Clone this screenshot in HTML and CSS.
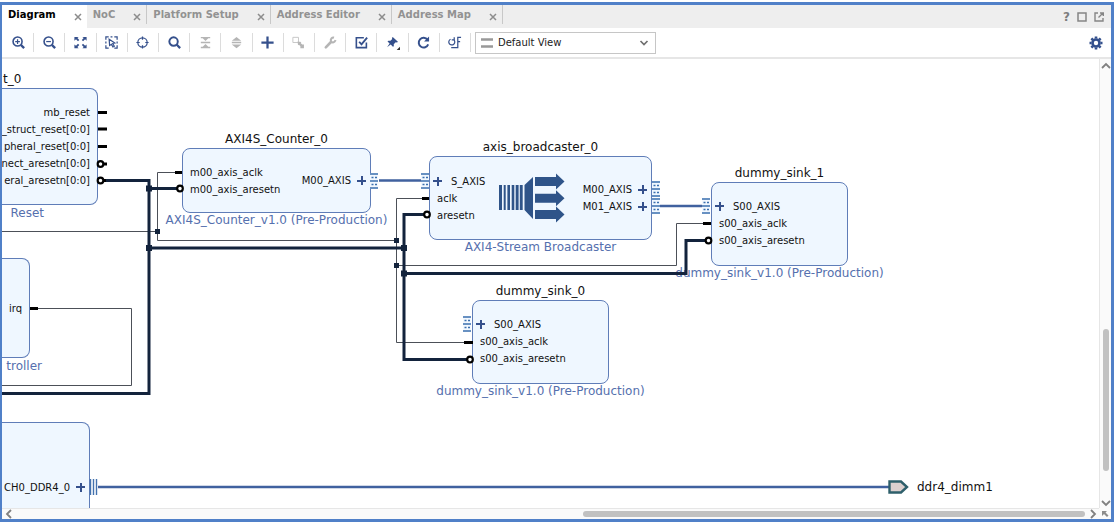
FILE: index.html
```html
<!DOCTYPE html>
<html lang="en">
<head>
<meta charset="utf-8">
<title>Diagram</title>
<link rel="stylesheet" href="styles.css">
</head>
<body>
<svg class="defs" aria-hidden="true">
  <defs>
    <symbol id="x" viewBox="0 0 8 8"><path d="M1 1L7 7M7 1L1 7" stroke="#8c8c8c" stroke-width="1.5" fill="none"/></symbol>
    <g id="bus" stroke="#3b6fae" stroke-width="1.3">
      <rect width="8" height="16" fill="#f2f8ff" stroke="none"/>
      <path d="M0 1H8M0 8H8M0 15H8"/>
      <path d="M1.5 4.5H3.5M5 4.5H7M1.5 11.5H3.5M5 11.5H7"/>
    </g>
    <circle id="ring" r="2.8" fill="#fff" stroke="#000" stroke-width="2.2"/>
    <rect id="dot" x="-3" y="-3" width="6" height="6"/>
    <path id="arrow" d="M0 -4.5H21V-8L29.500 0L21 8V4.500H0Z"/>
  </defs>
</svg>
<main class="frame">
  <header class="tabs">
    <nav class="tablist">
      <div class="tab active"><button class="name">Diagram</button><button class="close" aria-label="Close"><svg><use href="#x"/></svg></button></div>
      <div class="tab"><button class="name">NoC</button><button class="close" aria-label="Close"><svg><use href="#x"/></svg></button></div>
      <div class="tab"><button class="name">Platform Setup</button><button class="close" aria-label="Close"><svg><use href="#x"/></svg></button></div>
      <div class="tab"><button class="name">Address Editor</button><button class="close" aria-label="Close"><svg><use href="#x"/></svg></button></div>
      <div class="tab"><button class="name">Address Map</button><button class="close" aria-label="Close"><svg><use href="#x"/></svg></button></div>
    </nav>
    <div class="window-actions">
      <button class="help">?</button>
      <button aria-label="Maximize"><svg width="10" height="10" viewBox="0 0 10 10"><rect x="1" y="1" width="8" height="8" fill="none" stroke="#858585" stroke-width="1.5"/></svg></button>
      <button aria-label="Float"><svg width="10" height="10" viewBox="0 0 10 10" fill="none" stroke="#858585" stroke-width="1.4"><path d="M4 1H1V9H9V6M4.500 5.500L9 1M6 1H9.300V4"/></svg></button>
    </div>
  </header>

  <div class="toolbar">
    <div class="tools">
      <button aria-label="Zoom in"><svg viewBox="0 0 16 16"><g class="ln"><circle cx="7" cy="7" r="4.8"/><path d="M10.500 10.500L14 14" stroke-width="2.4"/><path d="M4.500 7H9.500M7 4.500V9.500" stroke-width="1.300"/></g></svg></button>
      <button aria-label="Zoom out"><svg viewBox="0 0 16 16"><g class="ln"><circle cx="7" cy="7" r="4.8"/><path d="M10.500 10.500L14 14" stroke-width="2.4"/><path d="M4.500 7H9.500" stroke-width="1.300"/></g></svg></button>
      <button aria-label="Zoom fit"><svg viewBox="0 0 16 16"><path class="fl" d="M1.500 2H6L4.700 3.300L6.700 5.300L5.300 6.600L3.200 4.600L1.500 6ZM14.500 2V6L12.900 4.600L10.700 6.600L9.400 5.300L11.400 3.300L10 2ZM1.500 14V10L3.200 11.500L5.300 9.400L6.700 10.700L4.700 12.700L6 14ZM14.500 14H10L11.400 12.700L9.400 10.700L10.700 9.400L12.900 11.500L14.500 10Z"/></svg></button>
      <button aria-label="Zoom to selection"><svg viewBox="0 0 16 16"><g class="ln thin"><path d="M2 5V2H5M7 2H9M11 2H14V5M14 7V9M14 11V14H11M5 14H2V11M2 9V7"/><path d="M5.500 4.500L11.500 8.500L9.300 9L11 12L9.500 12.800L8 9.900L6 11.200Z"/></g></svg></button>
      <button aria-label="Center"><svg viewBox="0 0 16 16"><g class="ln thin"><circle cx="8" cy="8" r="5"/><path d="M8 1.500V5M8 11V14.500M1.500 8H5M11 8H14.500"/></g></svg></button>
      <button aria-label="Search"><svg viewBox="0 0 16 16"><g class="ln wide"><circle cx="7" cy="7" r="4.500"/><path d="M10.200 10.200L14 14" stroke-width="2.400"/></g></svg></button>
      <button aria-label="Collapse"><svg viewBox="0 0 16 16"><path class="off" d="M3 2H13V3.500H3ZM3 7.300H13V8.700H3ZM3 12.500H13V14H3ZM5 3.500H11L8 6.500ZM5 12.500H11L8 9.500Z"/></svg></button>
      <button aria-label="Expand"><svg viewBox="0 0 16 16"><path class="off" d="M3 6L8 2L13 6ZM3 10L8 14L13 10ZM3 7.300H13V8.700H3Z"/></svg></button>
      <button aria-label="Add IP"><svg viewBox="0 0 16 16"><path class="fl" d="M6.800 1.500H9.200V6.800H14.500V9.200H9.200V14.500H6.800V9.200H1.500V6.800H6.800Z"/></svg></button>
      <button aria-label="Make external"><svg viewBox="0 0 16 16"><path d="M2 2.500H8V8H2Z" fill="none" stroke="#c5c5c5"/><path class="off" d="M7 7L11 7.500L10.300 8.500L12 10L13.800 10V14H10V12L8.500 10.300L7.500 11Z"/></svg></button>
      <button aria-label="Customize"><svg viewBox="0 0 16 16"><path d="M3 13.200L8.500 7.500" stroke="#b5b5b5" stroke-width="2.800" stroke-linecap="round"/><path d="M11.800 2.800C9.500 2.400 7.700 4.300 8.500 6.500S12 8.500 13.500 5.500" stroke="#b5b5b5" stroke-width="2.200" fill="none"/></svg></button>
      <button aria-label="Validate"><svg viewBox="0 0 16 16"><g class="ln"><path d="M10.500 3H2.500V13.500H13.200V8"/><path d="M5.500 7.200L8 10L14 2.800" stroke-width="2"/></g></svg></button>
      <button aria-label="Pin"><svg viewBox="0 0 18 16"><path class="fl" d="M9.300 1.500L15.500 7L14.500 8L12.800 7.600L10.500 10L10.600 12.500L9.500 13.200L6.800 10.500L2.500 13.800L5.500 9.300L3 6.800L4 5.800L6.500 6L8.700 3.700L8.300 2.500Z"/><path d="M18 13V17H14Z" fill="#333"/></svg></button>
      <button aria-label="Refresh"><svg viewBox="0 0 16 16"><path d="M12.300 5A5.200 5.200 0 1 0 13 10" class="ln wide"/><path class="fl" d="M13.900 1.500V7H8.600Z"/></svg></button>
      <button aria-label="Regenerate layout"><svg viewBox="0 0 16 16"><g class="ln thin"><path d="M3.800 4.500A3.200 3.200 0 1 0 7.200 5M7.700 2.500V5.300H5"/><path d="M15 2.500H11.500V13.500H4.500M11.500 7H14"/></g></svg></button>
    </div>
    <label class="view">
      <svg class="lines" width="12" height="10" viewBox="0 0 12 10"><path d="M0 1.500H12M0 8.500H12" stroke="#999" stroke-width="2.600"/></svg>
      <select aria-label="View"><option>Default View</option></select>
      <svg class="chev" width="10" height="8" viewBox="0 0 10 8"><path d="M1.500 2L5 5.500L8.500 2" fill="none" stroke="#707070" stroke-width="1.700"/></svg>
    </label>
    <button class="gear" aria-label="Settings"><svg width="14" height="14" viewBox="0 0 14 14"><g stroke="#324f8c" fill="none"><circle cx="7" cy="7" r="3.500" stroke-width="2.600"/><path d="M7 .5V2.500M7 11.500V13.500M.5 7H2.500M11.500 7H13.500M2.400 2.400L3.800 3.800M10.200 10.200L11.600 11.600M2.400 11.600L3.800 10.200M10.200 3.800L11.600 2.400" stroke-width="2.600"/></g></svg></button>
  </div>

  <div class="workspace">
    <section class="canvas">
      <article class="node cut reset">
        <h2>t_0</h2>
        <div class="box"><ul class="out"><li>mb_reset</li><li>_struct_reset[0:0]</li><li>pheral_reset[0:0]</li><li>nect_aresetn[0:0]</li><li>eral_aresetn[0:0]</li></ul></div>
        <p>Reset</p>
      </article>
      <article class="node cut irq">
        <div class="box"><ul class="out"><li>irq</li></ul></div>
        <p>troller</p>
      </article>
      <article class="node cut ddr">
        <div class="box"><ul class="out"><li>CH0_DDR4_0 <i class="plus"></i></li></ul></div>
      </article>
      <article class="node counter">
        <h2>AXI4S_Counter_0</h2>
        <div class="box"><ul><li>m00_axis_aclk</li><li>m00_axis_aresetn</li></ul><ul class="out"><li>M00_AXIS <i class="plus"></i></li></ul></div>
        <p>AXI4S_Counter_v1.0 (Pre-Production)</p>
      </article>
      <article class="node broadcaster">
        <h2>axis_broadcaster_0</h2>
        <div class="box"><ul><li class="bus"><i class="plus"></i> S_AXIS</li><li>aclk</li><li>aresetn</li></ul><ul class="out"><li>M00_AXIS <i class="plus"></i></li><li>M01_AXIS <i class="plus"></i></li></ul></div>
        <p>AXI4-Stream Broadcaster</p>
      </article>
      <article class="node sink sink1">
        <h2>dummy_sink_1</h2>
        <div class="box"><ul><li class="bus"><i class="plus"></i> S00_AXIS</li><li>s00_axis_aclk</li><li>s00_axis_aresetn</li></ul></div>
        <p>dummy_sink_v1.0 (Pre-Production)</p>
      </article>
      <article class="node sink sink0">
        <h2>dummy_sink_0</h2>
        <div class="box"><ul><li class="bus"><i class="plus"></i> S00_AXIS</li><li>s00_axis_aclk</li><li>s00_axis_aresetn</li></ul></div>
        <p>dummy_sink_v1.0 (Pre-Production)</p>
      </article>
      <span class="port">ddr4_dimm1</span>

      <svg class="wires" width="1098" height="449" viewBox="2 59 1098 449" aria-hidden="true">
        <g fill="none" stroke="#4c5058">
          <path d="M2 231.500H157.500M182 172.500H157.500V240.500H396.500M429 198.500H396.500V342.500H473M396.500 265.500H676.500V223.500H711M38 308.500H131.500V385.500H2"/>
        </g>
        <g fill="none" stroke="#13233c" stroke-width="3">
          <path d="M103 180.500H149V393.500H2M149 188.500H178M149 248H404V273.500M425 214.500H404V359.500H468M404 273.500H686V240.500H706"/>
        </g>
        <g fill="#13233c"><use href="#dot" x="149" y="188.500"/><use href="#dot" x="149" y="248"/><use href="#dot" x="404" y="248"/><use href="#dot" x="404" y="273.500"/></g>
        <path d="M155 229H160V234H155ZM394 238H399V243H394ZM394 263H399V268H394Z" fill="#13233c"/>
        <path d="M98 112.500H107M98 129H107M98 146.500H107M101 164H107M98 180.500H106M175 172.500H182M422 198.500H429M703 223.500H711M464 342.500H473M30 308.500H38" stroke="#000" stroke-width="3"/>
        <use href="#ring" x="100.500" y="164"/><use href="#ring" x="100.500" y="180.500"/><use href="#ring" x="180" y="188.500"/><use href="#ring" x="427" y="214.500"/><use href="#ring" x="708.500" y="240.500"/><use href="#ring" x="470" y="359.500"/>
        <path d="M379 180.500H422M660 206H703M98 487H889" stroke="#40619f" stroke-width="2.600"/>
        <use href="#bus" x="370" y="173"/><use href="#bus" x="421" y="173"/><use href="#bus" x="652" y="181"/><use href="#bus" x="652" y="198"/><use href="#bus" x="702" y="198"/><use href="#bus" x="463" y="316"/>
        <path d="M90.500 479V495M93.500 479V495M96.500 479V495" stroke="#4472ae" stroke-width="1.400"/>
        <path d="M889.500 481.500H901L907 487L901 492.500H889.500Z" fill="#dcd0cf" stroke="#2e5f6b" stroke-width="2.400"/>
        <g fill="#2f5489">
          <path d="M499 185H502V210H499ZM503.700 185H505.700V210H503.700ZM507.400 185H510V210H507.400ZM511.700 185H514.300V210H511.700ZM515.700 185H518.600V210H515.700ZM519.800 185H522.700V210H519.800ZM524.500 185L533 177V219L524.500 210Z"/>
          <use href="#arrow" x="535" y="181.500"/><use href="#arrow" x="535" y="198.300"/><use href="#arrow" x="535" y="214.500"/>
        </g>
      </svg>
    </section>
    <div class="vbar"><svg width="10" height="8" viewBox="0 0 10 8"><path d="M1 6L5 2L9 6"/></svg><div class="track"><i></i></div><svg width="10" height="8" viewBox="0 0 10 8"><path d="M1 2L5 6L9 2"/></svg></div>
    <div class="hbar"><svg width="8" height="10" viewBox="0 0 8 10"><path d="M6 1L2 5L6 9"/></svg><div class="track"><i></i></div><svg width="8" height="10" viewBox="0 0 8 10"><path d="M2 1L6 5L2 9"/></svg></div>
    <div class="corner"><svg width="8" height="8" viewBox="0 0 8 8"><path d="M1 1H6L4.500 2.500L7.500 5.500L6 7L3 4L1 6Z" fill="#8c8c8c"/></svg></div>
  </div>
</main>
</body>
</html>
```
FILE: styles.css
```css
* { box-sizing: border-box; }
body { margin: 0; background: #fff; font-family: "DejaVu Sans", sans-serif; font-size: 10px; color: #111; }
button { border: 0; padding: 0; background: none; font: inherit; color: inherit; display: flex; align-items: center; justify-content: center; }
ul, h2, p { margin: 0; padding: 0; list-style: none; font-weight: 400; }
.defs { position: absolute; width: 0; height: 0; }

.frame { display: flex; flex-direction: column; height: calc(100vh - 7px); margin: 2px 3px 5px 0; border: 3px solid #5080c8; border-left-width: 2px; }
.tabs { display: flex; justify-content: space-between; height: 23px; background: #eee; flex: none; }
.tablist { display: flex; }
.tab { display: flex; align-items: center; gap: 18px; padding: 0 5px 0 6px; color: #929292; font-weight: 700; border-right: 1px solid transparent; }
.tab:not(.active) { background: linear-gradient(#c8c8c8, #c8c8c8) right top / 1px 19px no-repeat border-box; }
.tab.active { background: #fff; color: #000; border-right: 0; }
.tab .name { height: 20px; line-height: 20px; align-self: flex-start; }
.close svg { display: block; width: 8px; height: 8px; }
.window-actions { display: flex; align-items: center; gap: 7px; padding-right: 7px; }
.help { color: #7d7d7d; font-size: 12px; font-weight: 700; }

.toolbar { display: flex; align-items: center; height: 31px; padding: 0 8px 0 1px; border-bottom: 2px solid #e6e6e6; flex: none; }
.tools { display: grid; grid-template-columns: repeat(15, 1fr); width: 468px; }
.tools button { height: 19px; border-right: 1px solid #dcdcdc; }
.tools svg { width: 15px; height: 15px; overflow: visible; }
.ln { fill: none; stroke: #35508c; stroke-width: 1.7; }
.ln.thin { stroke-width: 1.3; }
.ln.wide { stroke-width: 2.1; }
.fl { fill: #35508c; }
.off { fill: #b5b5b5; }
.view { position: relative; margin-left: 4px; }
.view select { display: block; width: 181px; height: 22px; padding: 0 20px 0 22px; border: 1px solid #c6c6c6; border-radius: 0; background: #fff; appearance: none; font: inherit; color: #222; }
.lines { position: absolute; left: 6px; top: 6px; }
.chev { position: absolute; right: 7px; top: 7px; }
.gear { margin-left: auto; }

.workspace { display: grid; grid-template: minmax(0, 1fr) 11px / minmax(0, 1fr) 12px; flex: 1; min-height: 0; }
.canvas { position: relative; overflow: hidden; }
.wires { position: absolute; left: 0; top: 0; }
.node { position: absolute; display: flex; flex-direction: column; align-items: center; white-space: nowrap; }
.node h2 { font-size: 12px; line-height: 22px; height: 20px; }
.node p { font-size: 12px; line-height: 14px; color: #5570ae; }
.box { display: flex; justify-content: space-between; align-self: stretch; height: 84px; padding: 0 7px; border: 1px solid #5f7db8; border-radius: 8px; background: #eff7ff; }
.box ul { display: flex; flex-direction: column; justify-content: center; }
.box li { display: flex; align-items: center; gap: 6px; height: 17px; }
.box .out { align-items: flex-end; margin-left: auto; }
.box .bus { margin-left: -4px; gap: 9px; }
.plus { width: 9px; height: 9px; background: linear-gradient(#35508c, #35508c) center / 9px 2px no-repeat, linear-gradient(#35508c, #35508c) center / 2px 9px no-repeat; }
.cut { align-items: flex-start; left: -12px; }
.cut .box { border-left: 0; }
.reset { top: 9px; width: 108px; }
.reset h2 { padding-left: 13px; }
.reset .box { height: 117px; }
.reset p { width: 54px; text-align: right; line-height: 16px; }
.irq { top: 199px; width: 40px; }
.irq .box { height: 100px; }
.irq p { width: 52px; text-align: right; line-height: 16px; }
.ddr { top: 363px; width: 100px; }
.ddr .box { height: 130px; padding-right: 4px; }
.counter { left: 180px; top: 69px; width: 189px; }
.counter .box { height: 65px; }
.counter .box, .broadcaster .box { padding-right: 4px; }
.broadcaster { left: 427px; top: 77px; width: 223px; }
.sink { width: 137px; }
.sink .box { padding-bottom: 2px; }
.sink1 { left: 709px; top: 103px; }
.sink0 { left: 470px; top: 221px; }
.port { position: absolute; left: 915px; top: 420px; font-size: 12px; line-height: 16px; }

.vbar, .hbar { display: flex; align-items: center; background: #fafafa; }
.vbar { flex-direction: column; border-left: 1px solid #e6e6e6; padding: 3px 0 1px; }
.hbar { border-top: 1px solid #e6e6e6; padding: 0 2px 0 3px; }
.vbar svg, .hbar svg { flex: none; fill: none; stroke: #808080; stroke-width: 1.8; }
.track { flex: 1; display: flex; min-height: 0; }
.track i { background: #c1c1c1; border-radius: 3px; }
.vbar .track { flex-direction: column; width: 6px; }
.vbar .track::before { content: ""; flex: 259; }
.vbar .track i { flex: 142; }
.vbar .track::after { content: ""; flex: 28; }
.hbar .track { height: 6px; }
.hbar .track::before { content: ""; flex: 569; }
.hbar .track i { flex: 502; }
.hbar .track::after { content: ""; flex: 4; }
.corner { display: flex; align-items: center; justify-content: center; background: #fafafa; }
```
